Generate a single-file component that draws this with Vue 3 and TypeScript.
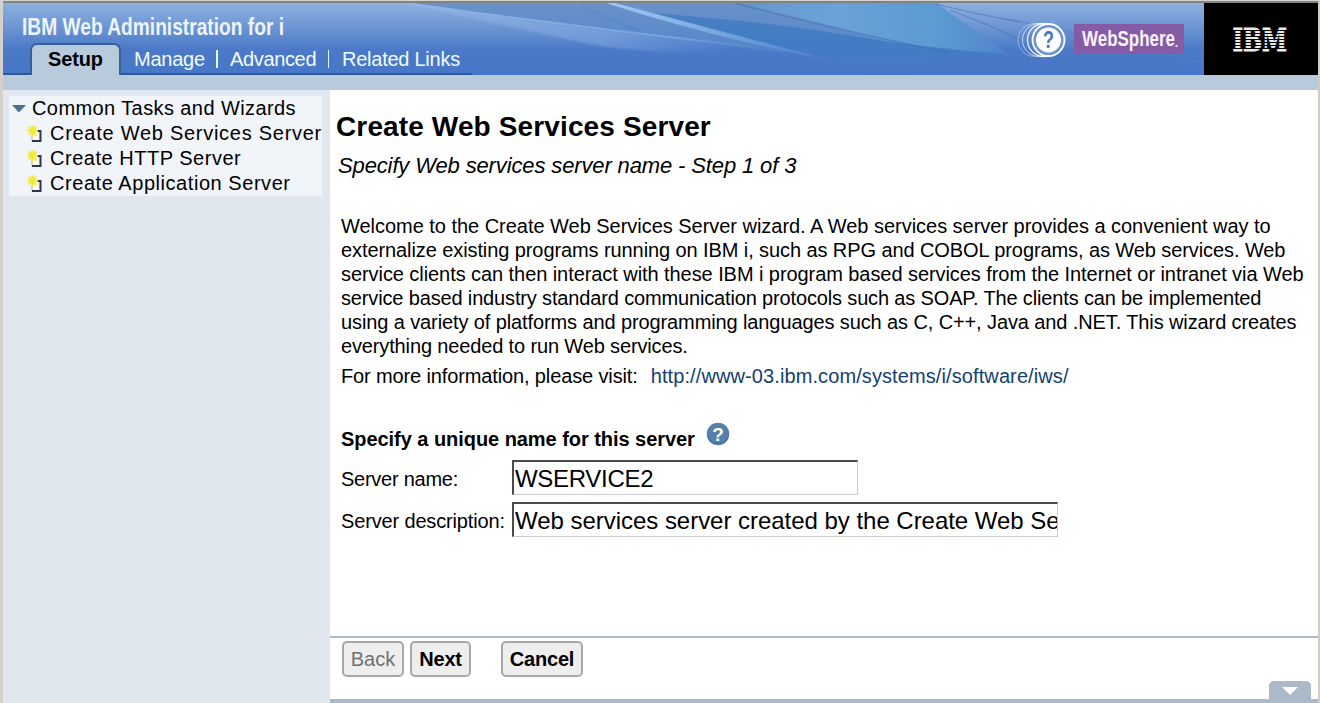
<script setup lang="ts">
import { ref } from 'vue'

interface TextLine {
  text: string
  cls: string
}

const tabs: string[] = ['Manage', 'Advanced', 'Related Links']
const tasks: TextLine[] = [
  { text: 'Create Web Services Server', cls: 't1' },
  { text: 'Create HTTP Server', cls: 't2' },
  { text: 'Create Application Server', cls: 't3' },
]
const intro: TextLine[] = [
  { text: 'Welcome to the Create Web Services Server wizard. A Web services server provides a convenient way to', cls: 'l1' },
  { text: 'externalize existing programs running on IBM i, such as RPG and COBOL programs, as Web services. Web', cls: 'l2' },
  { text: 'service clients can then interact with these IBM i program based services from the Internet or intranet via Web', cls: 'l3' },
  { text: 'service based industry standard communication protocols such as SOAP. The clients can be implemented', cls: 'l4' },
  { text: 'using a variety of platforms and programming languages such as C, C++, Java and .NET. This wizard creates', cls: 'l5' },
  { text: 'everything needed to run Web services.', cls: 'l6' },
]
const serverName = ref('WSERVICE2')
const serverDescription = ref('Web services server created by the Create Web Services wizard.')
const stripes: number[] = [0, 1, 2, 3, 4, 5, 6]
</script>

<template>
  <div class="window">
    <header class="banner">
      <svg class="art" width="1201" height="72" viewBox="3 3 1201 72">
        <defs>
          <linearGradient id="base" x1="0" y1="0" x2="0" y2="1">
            <stop offset="0" stop-color="#8db0de" />
            <stop offset="0.35" stop-color="#6b94d3" />
            <stop offset="0.65" stop-color="#4b79c8" />
            <stop offset="1" stop-color="#4777c7" />
          </linearGradient>
          <linearGradient id="mid" gradientUnits="userSpaceOnUse" x1="0" y1="3" x2="0" y2="60">
            <stop offset="0" stop-color="#6a92ca" />
            <stop offset="0.7" stop-color="#5887ca" />
            <stop offset="1" stop-color="#4979c8" />
          </linearGradient>
          <linearGradient id="sky" gradientUnits="userSpaceOnUse" x1="740" y1="0" x2="1005" y2="0">
            <stop offset="0" stop-color="#6796cf" />
            <stop offset="0.35" stop-color="#6ca2d8" />
            <stop offset="0.75" stop-color="#5b9ad3" />
            <stop offset="1" stop-color="#5085cb" />
          </linearGradient>
          <linearGradient id="deep" gradientUnits="userSpaceOnUse" x1="0" y1="15" x2="0" y2="66">
            <stop offset="0" stop-color="#4880c1" />
            <stop offset="0.5" stop-color="#427dc4" />
            <stop offset="1" stop-color="#4979c8" />
          </linearGradient>
          <linearGradient id="glow" gradientUnits="userSpaceOnUse" x1="395" y1="0" x2="740" y2="0">
            <stop offset="0" stop-color="#9fc0ea" stop-opacity="0.4" />
            <stop offset="0.6" stop-color="#85ace4" stop-opacity="0.5" />
            <stop offset="1" stop-color="#6a97dc" stop-opacity="0" />
          </linearGradient>
          <linearGradient id="ray" gradientUnits="userSpaceOnUse" x1="608" y1="0" x2="838" y2="0">
            <stop offset="0" stop-color="#a0caf1" />
            <stop offset="0.5" stop-color="#73a5df" />
            <stop offset="1" stop-color="#4979c8" />
          </linearGradient>
          <linearGradient id="edge" gradientUnits="userSpaceOnUse" x1="400" y1="0" x2="790" y2="0">
            <stop offset="0" stop-color="#9cc0ec" />
            <stop offset="0.7" stop-color="#7da8e2" />
            <stop offset="1" stop-color="#4979c8" />
          </linearGradient>
          <filter id="soft" x="-5%" y="-20%" width="110%" height="140%">
            <feGaussianBlur stdDeviation="1.2" />
          </filter>
        </defs>
        <rect x="3" y="3" width="1201" height="72" fill="url(#base)" />
        <path d="M405 3H936Q970 30 1008 54Q900 66 790 54Q740 48 720 44Q560 28 405 3Z" fill="url(#mid)" />
        <path d="M740 3H936Q970 28 1008 54Q930 52 860 34Q800 18 740 3Z" fill="url(#sky)" filter="url(#soft)" />
        <path d="M650 13Q760 21 840 34Q920 48 1008 54Q910 70 836 63Q730 40 650 13Z" fill="url(#deep)" />
        <path d="M405 3Q560 25 720 43L740 50Q660 56 590 44Q500 25 405 3Z" fill="url(#glow)" filter="url(#soft)" />
        <path d="M405 3Q560 25 720 43T790 54" fill="none" stroke="url(#edge)" stroke-width="2" opacity="0.75" />
        <path d="M606 3L615 3Q720 31 838 62Q710 37 606 3Z" fill="url(#ray)" />
        <path d="M735 3Q820 26 950 53" fill="none" stroke="#416fae" stroke-width="1.3" opacity="0.6" />
        <path d="M580 5Q610 20 640 31" fill="none" stroke="#4977b9" stroke-width="1" opacity="0.5" />
        <path d="M936 4Q975 14 1020 22M950 10Q990 25 1020 40" fill="none" stroke="#4e75b3" stroke-width="1.2" opacity="0.65" />
        <path d="M1000 18Q1080 32 1201 62" fill="none" stroke="#557fc0" stroke-width="1.5" opacity="0.5" />
        <text x="22" y="34.5" class="product" textLength="262" lengthAdjust="spacingAndGlyphs">IBM Web Administration for i</text>
        <g fill="none" stroke="#fff">
          <circle cx="1034.5" cy="40" r="16.5" stroke-width="0.8" opacity="0.45" />
          <circle cx="1039" cy="40" r="16.5" stroke-width="1" opacity="0.65" />
          <circle cx="1044" cy="40" r="16.5" stroke-width="1.4" opacity="0.85" />
          <circle cx="1048.5" cy="40" r="16" fill="#6e95d0" stroke-width="1.8" />
        </g>
        <circle cx="1048.5" cy="40" r="12.500" fill="#fff" />
        <text x="1048.5" y="48" class="mark" textLength="11" lengthAdjust="spacingAndGlyphs">?</text>
        <rect x="1074" y="24" width="110" height="30" fill="#855ba5" />
        <text x="1082" y="46" class="sphere" textLength="93" lengthAdjust="spacingAndGlyphs">WebSphere</text>
        <rect x="1175.5" y="45" width="2" height="2" fill="#e5dcf0" />
      </svg>
      <nav class="tabs">
        <span class="tab active">Setup</span>
        <span v-for="(tab, i) in tabs" :key="tab" class="tab" :class="'n' + i">{{ tab }}</span>
      </nav>
      <svg class="ibm" width="114" height="72" viewBox="1204 3 114 72">
        <rect x="1204" y="3" width="114" height="72" fill="#000" />
        <text x="1232.5" y="51" class="ibmtext" textLength="54.5" lengthAdjust="spacingAndGlyphs">IBM</text>
        <rect v-for="s in stripes" :key="s" x="1230" :y="30 + s * 3" width="60" height="1" fill="#000" />
      </svg>
    </header>
    <div class="strip"></div>
    <div class="body">
      <aside class="side">
        <div class="tree">
          <div class="branch">
            <svg width="14" height="8" viewBox="0 0 14 8"><path d="M0 0H14L7 7.5Z" fill="#4c6e97" /></svg>
            <span>Common Tasks and Wizards</span>
          </div>
          <div v-for="task in tasks" :key="task.text" class="leaf">
            <svg width="16" height="18" viewBox="0 0 16 18">
              <path d="M5 6H13V16H5Z" fill="#fdfcec" />
              <path d="M5 10V16H12" fill="none" stroke="#b9b88c" stroke-width="1" />
              <path d="M10.500 6H13.500V16H5" fill="none" stroke="#2f3652" stroke-width="2" />
              <circle cx="5.500" cy="5.500" r="4.200" fill="#f7f36a" />
              <path d="M1.500 1.500L9.500 10.500M9.500 1.500L1.500 9.500M5.500 0V11.500M0 5.500H11" stroke="#f0ea33" stroke-width="1.600" />
            </svg>
            <span :class="task.cls">{{ task.text }}</span>
          </div>
        </div>
      </aside>
      <main class="main">
        <h1>Create Web Services Server</h1>
        <p class="step">Specify Web services server name - Step 1 of 3</p>
        <div class="intro">
          <div v-for="line in intro" :key="line.cls" class="line" :class="line.cls">{{ line.text }}</div>
        </div>
        <div class="more"><span>For more information, please visit:</span><a>http://www-03.ibm.com/systems/i/software/iws/</a></div>
        <div class="section">
          <h2>Specify a unique name for this server</h2>
          <svg width="24" height="24" viewBox="0 0 24 24">
            <circle cx="12" cy="12" r="11.300" fill="#5780ac" />
            <path d="M2 15A11 11 0 0 0 22 15" fill="none" stroke="#416790" stroke-width="1.500" opacity="0.6" />
            <text x="12" y="18.500" class="help">?</text>
          </svg>
        </div>
        <div class="field">
          <label class="f1">Server name:</label>
          <input v-model="serverName" class="name" type="text" />
        </div>
        <div class="field">
          <label class="f2">Server description:</label>
          <input v-model="serverDescription" class="desc" type="text" />
        </div>
        <footer class="actions">
          <button class="back" disabled>Back</button>
          <button class="next">Next</button>
          <button class="cancel">Cancel</button>
        </footer>
        <div class="drawer">
          <div class="grip">
            <svg width="16" height="8" viewBox="0 0 16 8"><path d="M0 0H16L8 8Z" fill="#fff" /></svg>
          </div>
        </div>
      </main>
    </div>
  </div>
</template>

<style>
html,
body {
  margin: 0;
  overflow: hidden;
}
</style>

<style scoped>
.window {
  box-sizing: border-box;
  width: 1320px;
  height: 703px;
  border-left: 3px solid #d5d0c9;
  border-right: 2px solid #d0cdc8;
  border-top: 1px solid #d5d3cd;
  background: #fff;
  color: #000;
  font-family: "Liberation Sans", Arial, sans-serif;
  font-size: 20px;
  display: flex;
  flex-direction: column;
  overflow: hidden;
}
.banner {
  position: relative;
  display: flex;
  flex: none;
  height: 72px;
  border-top: 2px solid #7c8487;
}
.art,
.ibm {
  display: block;
  flex: none;
}
.product {
  font: bold 24px "Liberation Sans", Arial, sans-serif;
  fill: #edf4fd;
}
.mark {
  font: bold 23px "Liberation Sans", Arial, sans-serif;
  fill: #4977ba;
  text-anchor: middle;
}
.sphere {
  font: bold 22px "Liberation Sans", Arial, sans-serif;
  fill: #f6f1fb;
}
.ibmtext {
  font: bold 31.5px "DejaVu Serif", serif;
  fill: #e9e9e5;
  stroke: #e9e9e5;
  stroke-width: 0.8px;
}
.tabs {
  position: absolute;
  left: 0;
  bottom: 0;
  width: 469px;
  height: 32px;
  display: flex;
  color: #f2fbff;
  box-shadow: inset 0 -2px 0 #2f5796;
}
.tab {
  position: relative;
  box-sizing: border-box;
  line-height: 32px;
  white-space: nowrap;
}
.tab.active {
  width: 91px;
  margin-left: 27px;
  padding-left: 16px;
  border: 2px solid #35609a;
  border-bottom: 0;
  border-radius: 7px 7px 0 0;
  background: #b8cbdc;
  color: #000;
  font-weight: bold;
  line-height: 28px;
  letter-spacing: -0.15px;
}
.n0 {
  width: 95px;
  padding-left: 13px;
  letter-spacing: -0.25px;
}
.n1 {
  width: 112px;
  padding-left: 14px;
  letter-spacing: -0.35px;
}
.n2 {
  padding-left: 14px;
  letter-spacing: -0.25px;
}
.n1::before,
.n2::before {
  content: "";
  position: absolute;
  left: 0;
  top: 7px;
  width: 1px;
  height: 18px;
  background: #e8f7ff;
}
.n1::before {
  width: 2px;
}
.strip {
  flex: none;
  height: 15px;
  background: #b8cbdc;
}
.body {
  flex: 1;
  display: flex;
  min-height: 0;
}
.side {
  box-sizing: border-box;
  flex: none;
  width: 327px;
  padding: 6px 8px 0 6px;
  background: #e0e7ef;
}
.tree {
  height: 100px;
  background: #f1f4f8;
}
.branch,
.leaf {
  display: flex;
  align-items: center;
  height: 25px;
  white-space: nowrap;
}
.branch {
  padding-left: 3px;
  gap: 6px;
  letter-spacing: 0.41px;
}
.leaf {
  padding-left: 18px;
  gap: 7px;
}
.t1 {
  letter-spacing: 0.73px;
}
.t2 {
  letter-spacing: 0.52px;
}
.t3 {
  letter-spacing: 0.55px;
}
.main {
  flex: 1;
  min-width: 0;
  display: flex;
  flex-direction: column;
}
h1 {
  margin: 21px 0 0 6px;
  font-size: 28px;
  line-height: 32px;
  letter-spacing: 0.13px;
}
.step {
  margin: 11px 0 0 8px;
  font-size: 22px;
  font-style: italic;
  line-height: 24px;
  letter-spacing: -0.13px;
  white-space: nowrap;
}
.intro {
  margin: 36px 0 0 11px;
}
.line {
  height: 24px;
  line-height: 24px;
  white-space: nowrap;
}
.l1 {
  letter-spacing: -0.03px;
}
.l2 {
  letter-spacing: -0.09px;
}
.l3 {
  letter-spacing: -0.068px;
}
.l4 {
  letter-spacing: -0.15px;
}
.l5 {
  letter-spacing: -0.108px;
}
.l6 {
  letter-spacing: -0.14px;
}
.more {
  display: flex;
  gap: 13px;
  margin: 6px 0 0 11px;
  line-height: 24px;
  white-space: nowrap;
}
.more span {
  letter-spacing: -0.13px;
}
.more a {
  color: #14406f;
  letter-spacing: 0.1px;
}
.section {
  display: flex;
  gap: 11px;
  margin: 34px 0 0 11px;
  height: 36px;
}
h2 {
  margin: 5px 0 0;
  font-size: 20px;
  line-height: 24px;
  letter-spacing: -0.05px;
  white-space: nowrap;
}
.help {
  font: bold 19px "Liberation Sans", Arial, sans-serif;
  fill: #fff;
  text-anchor: middle;
}
.field {
  display: flex;
  align-items: flex-start;
  height: 36px;
  margin: 2px 0 4px 11px;
}
.field label {
  width: 171px;
  line-height: 38px;
  white-space: nowrap;
}
.f1 {
  letter-spacing: -0.25px;
}
.f2 {
  letter-spacing: -0.15px;
}
.field input {
  box-sizing: border-box;
  height: 35px;
  margin: 0;
  padding: 1px 0 0 1px;
  border: 2px solid #4b4b4b;
  border-right: 1px solid #ccc;
  border-bottom: 1px solid #ccc;
  border-radius: 0;
  background: #fff;
  color: #000;
  outline: none;
  font: 24px "Liberation Sans", Arial, sans-serif;
}
.field .name {
  width: 346px;
  letter-spacing: -0.3px;
}
.field .desc {
  width: 546px;
  letter-spacing: -0.03px;
}
.actions {
  box-sizing: border-box;
  display: flex;
  align-items: flex-start;
  height: 63px;
  margin-top: auto;
  padding: 3px 0 0 12px;
  border-top: 2px solid #abb9c8;
}
button {
  box-sizing: border-box;
  height: 36px;
  margin: 0;
  padding: 0;
  border: 2px solid #a8a8a8;
  border-radius: 5px;
  background: #eee;
  color: #000;
  font: bold 20px "Liberation Sans", Arial, sans-serif;
}
.back {
  width: 62px;
  margin-right: 6px;
  color: #707070;
  font-weight: normal;
}
.next {
  width: 61px;
  margin-right: 30px;
  letter-spacing: -0.2px;
}
.cancel {
  width: 82px;
  letter-spacing: -0.2px;
}
.drawer {
  position: relative;
  flex: none;
  height: 4px;
  background: #abb9c8;
}
.grip {
  position: absolute;
  right: 7px;
  bottom: 0;
  width: 42px;
  height: 22px;
  border-radius: 5px 5px 0 0;
  background: #abb9c8;
  display: flex;
  justify-content: center;
}
.grip svg {
  margin-top: 6px;
}
</style>
